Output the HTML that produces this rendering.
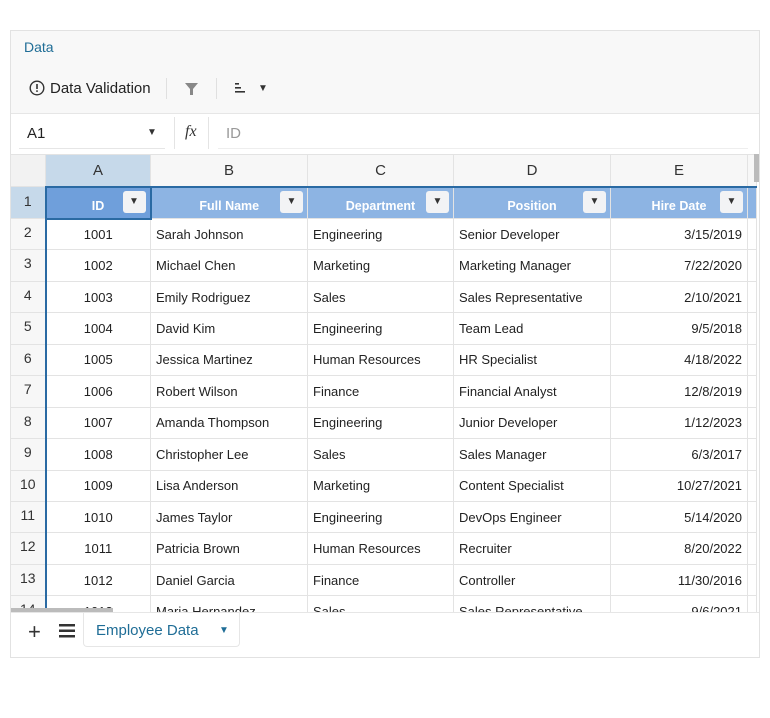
<!DOCTYPE html>
<html><head><style>
body{margin:0;width:770px;height:718px;background:#fff;font-family:"Liberation Sans",Arial,sans-serif;position:relative;overflow:hidden}
.outer{position:absolute;left:10px;top:30px;width:750px;height:628px;border:1px solid #e2e2e2;box-sizing:border-box;background:#fff}
.ribbon{position:absolute;left:11px;top:31px;width:748px;height:82px;background:#f8f8f8;border-bottom:1px solid #e6e6e6}
.abs{position:absolute}
.grid{position:absolute;left:10px;top:154px;width:748px;height:458px;overflow:hidden}
table{border-collapse:collapse;table-layout:fixed;font-size:13px;color:#222;width:746px}
tr{height:31.45px}
td{border:1px solid #e3e3e3;padding:0 5px;white-space:nowrap;overflow:hidden;box-sizing:border-box}
td.rh{text-align:center;background:#f7f7f7;font-size:14px;color:#333;padding:0;vertical-align:top;padding-top:5px}
tr.ch{height:32px}
tr.ch td{background:#f7f7f7;text-align:center;font-size:15px;color:#333}
tr.h1{height:32px}
tr.h1 td{background:#8db4e3;color:#fff;font-weight:bold;font-size:12.5px;text-align:center;position:relative;border-top:2px solid #2a6aa3;vertical-align:bottom;padding-bottom:5px}
.fb{position:absolute;right:4px;top:3px;width:23px;height:22px;background:#f2f3f5;border-radius:3px;color:#333;font-size:10px;line-height:22px;text-align:center;font-weight:normal}
.c{text-align:center}.r{text-align:right}
</style></head><body>
<div class="outer"></div>
<div class="ribbon"></div>
<div class="abs" style="left:24px;top:39px;font-size:14px;color:#1f6d96">Data</div>
<svg class="abs" style="left:29px;top:80px" width="16" height="16"><circle cx="8" cy="8" r="6.8" fill="none" stroke="#333" stroke-width="1.4"/><rect x="7.2" y="4" width="1.6" height="5" fill="#333"/><rect x="7.2" y="10.3" width="1.6" height="1.6" fill="#333"/></svg>
<div class="abs" style="left:50px;top:80px;font-size:15px;color:#222">Data Validation</div>
<div class="abs" style="left:166px;top:78px;width:1px;height:21px;background:#e0e0e0"></div>
<svg class="abs" style="left:184px;top:82px" width="15" height="14"><path d="M1 1H14L9 7V13H6V7Z" fill="#888"/></svg>
<div class="abs" style="left:216px;top:78px;width:1px;height:21px;background:#e0e0e0"></div>
<svg class="abs" style="left:234px;top:82px" width="12" height="12"><rect x="1" y="1" width="4" height="1.6" fill="#333"/><rect x="1" y="5" width="6" height="1.6" fill="#333"/><rect x="1" y="9" width="10" height="1.6" fill="#333"/></svg>
<div class="abs" style="left:258px;top:83px;font-size:10px;color:#333">▼</div>
<div class="abs" style="left:19px;top:114px;width:146px;height:34px;border-bottom:1px solid #e6e6e6"></div>
<div class="abs" style="left:27px;top:125px;font-size:15px;color:#222">A1</div>
<div class="abs" style="left:147px;top:127px;font-size:10px;color:#333">▼</div>
<div class="abs" style="left:174px;top:117px;width:1px;height:32px;background:#e4e4e4"></div>
<div class="abs" style="left:185px;top:123px;font-size:16px;font-style:italic;font-family:'Liberation Serif',serif;color:#333">fx</div>
<div class="abs" style="left:208px;top:117px;width:1px;height:32px;background:#e4e4e4"></div>
<div class="abs" style="left:226px;top:125px;font-size:15px;color:#999">ID</div>
<div class="abs" style="left:218px;top:148px;width:530px;height:1px;background:#eee"></div>
<div class="grid">
<table>
<colgroup><col style="width:35px"><col style="width:105px"><col style="width:157px"><col style="width:146px"><col style="width:157px"><col style="width:137px"><col style="width:9px"></colgroup>
<tr class="ch"><td style="background:#f2f2f2"></td><td style="background:#c6d9ea">A</td><td>B</td><td>C</td><td>D</td><td>E</td><td></td></tr>
<tr class="h1"><td class="rh" style="background:#c6d9ea;color:#333;font-weight:normal;font-size:14px;border-top:1px solid #e3e3e3;vertical-align:top;padding-top:6px;padding-bottom:0">1</td><td style="background:#6f9fdb;border:2px solid #2a6aa3">ID<span class="fb">▼</span></td><td>Full Name<span class="fb">▼</span></td><td>Department<span class="fb">▼</span></td><td>Position<span class="fb">▼</span></td><td>Hire Date<span class="fb">▼</span></td><td></td></tr>
<tr><td class="rh">2</td><td class="c" style="border-left:2px solid #2a6aa3">1001</td><td>Sarah Johnson</td><td>Engineering</td><td>Senior Developer</td><td class="r">3/15/2019</td><td></td></tr>
<tr><td class="rh">3</td><td class="c" style="border-left:2px solid #2a6aa3">1002</td><td>Michael Chen</td><td>Marketing</td><td>Marketing Manager</td><td class="r">7/22/2020</td><td></td></tr>
<tr><td class="rh">4</td><td class="c" style="border-left:2px solid #2a6aa3">1003</td><td>Emily Rodriguez</td><td>Sales</td><td>Sales Representative</td><td class="r">2/10/2021</td><td></td></tr>
<tr><td class="rh">5</td><td class="c" style="border-left:2px solid #2a6aa3">1004</td><td>David Kim</td><td>Engineering</td><td>Team Lead</td><td class="r">9/5/2018</td><td></td></tr>
<tr><td class="rh">6</td><td class="c" style="border-left:2px solid #2a6aa3">1005</td><td>Jessica Martinez</td><td>Human Resources</td><td>HR Specialist</td><td class="r">4/18/2022</td><td></td></tr>
<tr><td class="rh">7</td><td class="c" style="border-left:2px solid #2a6aa3">1006</td><td>Robert Wilson</td><td>Finance</td><td>Financial Analyst</td><td class="r">12/8/2019</td><td></td></tr>
<tr><td class="rh">8</td><td class="c" style="border-left:2px solid #2a6aa3">1007</td><td>Amanda Thompson</td><td>Engineering</td><td>Junior Developer</td><td class="r">1/12/2023</td><td></td></tr>
<tr><td class="rh">9</td><td class="c" style="border-left:2px solid #2a6aa3">1008</td><td>Christopher Lee</td><td>Sales</td><td>Sales Manager</td><td class="r">6/3/2017</td><td></td></tr>
<tr><td class="rh">10</td><td class="c" style="border-left:2px solid #2a6aa3">1009</td><td>Lisa Anderson</td><td>Marketing</td><td>Content Specialist</td><td class="r">10/27/2021</td><td></td></tr>
<tr><td class="rh">11</td><td class="c" style="border-left:2px solid #2a6aa3">1010</td><td>James Taylor</td><td>Engineering</td><td>DevOps Engineer</td><td class="r">5/14/2020</td><td></td></tr>
<tr><td class="rh">12</td><td class="c" style="border-left:2px solid #2a6aa3">1011</td><td>Patricia Brown</td><td>Human Resources</td><td>Recruiter</td><td class="r">8/20/2022</td><td></td></tr>
<tr><td class="rh">13</td><td class="c" style="border-left:2px solid #2a6aa3">1012</td><td>Daniel Garcia</td><td>Finance</td><td>Controller</td><td class="r">11/30/2016</td><td></td></tr>
<tr><td class="rh">14</td><td class="c" style="border-left:2px solid #2a6aa3">1013</td><td>Maria Hernandez</td><td>Sales</td><td>Sales Representative</td><td class="r">9/6/2021</td><td></td></tr>
</table>
</div>
<div class="abs" style="left:754px;top:154px;width:5px;height:28px;background:#bbb"></div>
<div class="abs" style="left:11px;top:608px;width:102px;height:4px;background:#bbb"></div>
<div class="abs" style="left:11px;top:612px;width:748px;height:45px;background:#fff;border-top:1px solid #e6e6e6;box-sizing:border-box"></div>
<div class="abs" style="left:28px;top:619px;font-size:22px;color:#333">+</div>
<svg class="abs" style="left:59px;top:624px" width="16" height="14"><rect y="0" width="16" height="2.5" fill="#333"/><rect y="5.5" width="16" height="2.5" fill="#333"/><rect y="11" width="16" height="2.5" fill="#333"/></svg>
<div class="abs" style="left:83px;top:613px;width:157px;height:34px;border:1px solid #e6e6e6;border-top:none;border-radius:0 0 4px 4px;box-sizing:border-box"></div>
<div class="abs" style="left:96px;top:622px;font-size:15px;color:#1f6d96">Employee Data</div>
<div class="abs" style="left:219px;top:625px;font-size:10px;color:#1f6d96">▼</div>
</body></html>
